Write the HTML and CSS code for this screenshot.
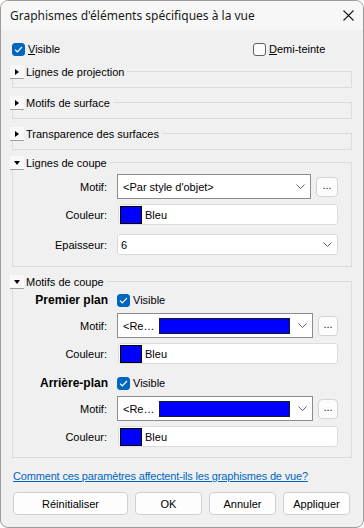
FILE: index.html
```html
<!DOCTYPE html>
<html lang="fr">
<head>
  <meta charset="UTF-8" />
  <title>Graphismes d'éléments spécifiques à la vue</title>
  <link rel="stylesheet" href="styles.css">
</head>
<body>
  <div class="window">
    <div class="titlebar">
      <span class="title">Graphismes d'éléments spécifiques à la vue</span>
      <svg class="close" width="11" height="11" viewBox="0 0 11 11"><path d="M0.5 0.5L10.5 10.5M10.5 0.5L0.5 10.5" stroke="#1a1a1a" stroke-width="1.1" fill="none"/></svg>
    </div>

    <div class="content">
      <div class="top-row">
        <label class="check"><span class="box on"><svg width="9" height="7" viewBox="0 0 9 7"><path d="M1 3.6L3.3 5.8L8 1" stroke="#fff" stroke-width="1.2" fill="none"/></svg></span><span><u>V</u>isible</span></label>
        <label class="check"><span class="box"></span><span><u>D</u>emi-teinte</span></label>
      </div>

      <div class="group collapsed first">
        <div class="group-head"><span class="twisty"><i class="tri-right"></i></span>Lignes de projection</div>
        <div class="group-body"></div>
      </div>

      <div class="group collapsed">
        <div class="group-head"><span class="twisty"><i class="tri-right"></i></span>Motifs de surface</div>
        <div class="group-body"></div>
      </div>

      <div class="group collapsed">
        <div class="group-head"><span class="twisty"><i class="tri-right"></i></span>Transparence des surfaces</div>
        <div class="group-body"></div>
      </div>

      <div class="group cut-lines">
        <div class="group-head"><span class="twisty"><i class="tri-down"></i></span>Lignes de coupe</div>
        <div class="group-body">
          <div class="row">
            <span class="lbl">Motif:</span>
            <div class="combo dark">
              <span class="combo-text">&lt;Par style d'objet&gt;</span>
              <svg class="chev" width="9" height="5" viewBox="0 0 9 5"><path d="M0.5 0.5L4.5 4.5L8.5 0.5" stroke="#606060" fill="none"/></svg>
            </div>
            <button class="dots">...</button>
          </div>
          <div class="row gap5">
            <span class="lbl">Couleur:</span>
            <div class="field"><span class="swatch"></span>Bleu</div>
          </div>
          <div class="row gap9">
            <span class="lbl">Epaisseur:</span>
            <div class="combo light">
              <span class="combo-text">6</span>
              <svg class="chev" width="9" height="5" viewBox="0 0 9 5"><path d="M0.5 0.5L4.5 4.5L8.5 0.5" stroke="#606060" fill="none"/></svg>
            </div>
          </div>
        </div>
      </div>

      <div class="group cut-patterns">
        <div class="group-head"><span class="twisty"><i class="tri-down"></i></span>Motifs de coupe</div>
        <div class="group-body">
          <div class="row sub">
            <span class="lbl bold">Premier plan</span>
            <label class="check"><span class="box on"><svg width="9" height="7" viewBox="0 0 9 7"><path d="M1 3.6L3.3 5.8L8 1" stroke="#fff" stroke-width="1.2" fill="none"/></svg></span><span>Visible</span></label>
          </div>
          <div class="row gap6">
            <span class="lbl">Motif:</span>
            <div class="combo dark">
              <span class="combo-text short">&lt;Re…</span>
              <span class="fill-bar"></span>
              <svg class="chev" width="9" height="5" viewBox="0 0 9 5"><path d="M0.5 0.5L4.5 4.5L8.5 0.5" stroke="#606060" fill="none"/></svg>
            </div>
            <button class="dots">...</button>
          </div>
          <div class="row gap5">
            <span class="lbl">Couleur:</span>
            <div class="field"><span class="swatch"></span>Bleu</div>
          </div>

          <div class="row sub gap12">
            <span class="lbl bold">Arrière-plan</span>
            <label class="check"><span class="box on"><svg width="9" height="7" viewBox="0 0 9 7"><path d="M1 3.6L3.3 5.8L8 1" stroke="#fff" stroke-width="1.2" fill="none"/></svg></span><span>Visible</span></label>
          </div>
          <div class="row gap6">
            <span class="lbl">Motif:</span>
            <div class="combo dark">
              <span class="combo-text short">&lt;Re…</span>
              <span class="fill-bar"></span>
              <svg class="chev" width="9" height="5" viewBox="0 0 9 5"><path d="M0.5 0.5L4.5 4.5L8.5 0.5" stroke="#606060" fill="none"/></svg>
            </div>
            <button class="dots">...</button>
          </div>
          <div class="row gap5">
            <span class="lbl">Couleur:</span>
            <div class="field"><span class="swatch"></span>Bleu</div>
          </div>
        </div>
      </div>

      <a class="help" href="#">Comment ces paramètres affectent-ils les graphismes de vue?</a>

      <div class="buttons">
        <button class="btn wide">Réinitialiser</button>
        <button class="btn">OK</button>
        <button class="btn">Annuler</button>
        <button class="btn">Appliquer</button>
      </div>
    </div>
  </div>
</body>
</html>
```

FILE: styles.css
```css
* {
  box-sizing: border-box;
}
body {
  margin: 0;
  font-family: 'Liberation Sans', Arial, sans-serif;
  font-size: 11px;
  line-height: 14px;
  color: #000;
  background: #fff;
}
.window {
  width: 364px;
  height: 528px;
  border: 1px solid #9c9c9c;
  border-radius: 8px;
  background: #f0f0f0;
  overflow: hidden;
  display: flex;
  flex-direction: column;
}
.titlebar {
  height: 29px;
  flex: none;
  background: #f7f7f7;
  display: flex;
  align-items: center;
  justify-content: space-between;
  padding: 0 9px 0 9px;
}
.title {
  font-family: 'Noto Sans', sans-serif;
  font-size: 12px;
  color: #1a1a1a;
}
.close {
  display: block;
}
.content {
  padding: 0 11px;
  display: flex;
  flex-direction: column;
}

/* checkboxes */
.check {
  display: flex;
  align-items: center;
  gap: 3px;
  height: 14px;
}
.box {
  width: 13px;
  height: 13px;
  border-radius: 3px;
  border: 1px solid #5f5f5f;
  background: #fbfbfb;
  display: flex;
  align-items: center;
  justify-content: center;
}
.box.on {
  border-color: #0067c0;
  background: #0067c0;
}
.box svg {
  display: block;
}
.top-row {
  display: grid;
  grid-template-columns: 241px auto;
  margin-top: 12px;
}

/* group boxes */
.group {
  border: 1px solid #dcdcdc;
  margin-top: 14px;
}
.group.first {
  margin-top: 15px;
}
.group.cut-lines {
  margin-top: 12px;
}
.group-head {
  display: flex;
  align-items: center;
  width: fit-content;
  height: 14px;
  margin: -7px 0 0 -3px;
  padding-right: 3px;
  background: #f0f0f0;
  white-space: nowrap;
}
.twisty {
  width: 14px;
  height: 14px;
  margin-right: 2px;
  background: #f9f9f9;
  border-bottom: 1px solid #a0a0a0;
  display: flex;
  align-items: center;
  justify-content: center;
}
.tri-right {
  width: 0;
  height: 0;
  border-top: 3.5px solid transparent;
  border-bottom: 3.5px solid transparent;
  border-left: 4px solid #000;
}
.tri-down {
  width: 0;
  height: 0;
  border-left: 3.5px solid transparent;
  border-right: 3.5px solid transparent;
  border-top: 4px solid #000;
}
.collapsed .group-body {
  height: 8px;
}
.cut-lines .group-body {
  padding: 4px 13px 11px 0;
}
.cut-patterns .group-body {
  padding: 4px 13px 10px 0;
}

/* form rows */
.row {
  display: flex;
  align-items: center;
}
.row.sub {
  height: 14px;
}
.row.gap5 { margin-top: 5px; }
.row.gap6 { margin-top: 6px; }
.row.gap9 { margin-top: 9px; }
.row.gap12 { margin-top: 12px; }
.lbl {
  width: 94px;
  margin-right: 10px;
  text-align: right;
  flex: none;
}
.lbl.bold {
  font-weight: 700;
  font-size: 12px;
  margin-right: 9px;
  width: 95px;
}
.combo {
  flex: 1;
  display: flex;
  align-items: center;
  background: #fff;
  padding: 0 5px;
}
.combo.dark {
  height: 25px;
  border: 1px solid #8c8c8c;
}
.combo.light {
  height: 21px;
  border: 1px solid #d9d9d9;
  border-radius: 3px;
  padding-left: 3px;
}
.combo-text {
  flex: 1;
}
.combo-text.short {
  flex: none;
  width: 36px;
}
.fill-bar {
  width: 131px;
  height: 16px;
  background: #0000ff;
  border: 1px solid #1a1a1a;
  margin-right: 8px;
}
.chev {
  display: block;
  flex: none;
}
.dots {
  width: 22px;
  height: 20px;
  margin-left: 5px;
  padding: 0 0 3px 0;
  border: 1px solid #d4d4d4;
  border-radius: 4px;
  background: #fcfcfc;
  font: inherit;
  color: #1a1a1a;
}
.field {
  flex: 1;
  height: 21px;
  margin-left: 1px;
  display: flex;
  align-items: center;
  gap: 3px;
  padding-left: 1px;
  background: #fff;
  border: 1px solid #dcdcdc;
  border-radius: 3px;
}
.swatch {
  width: 22px;
  height: 18px;
  background: #0000ff;
  border: 1px solid #000;
}

/* footer */
.help {
  margin-top: 10px;
  margin-left: 1px;
  color: #0067c0;
  line-height: 16px;
  letter-spacing: -0.17px;
  align-self: flex-start;
}
.buttons {
  display: flex;
  gap: 7px;
  margin-top: 8px;
  padding-left: 1px;
}
.btn {
  width: 67px;
  height: 23px;
  border: 1px solid #d0d0d0;
  border-radius: 4px;
  background: #fdfdfd;
  font: inherit;
  color: #000;
  padding: 0;
}
.btn.wide {
  width: 115px;
}
```
